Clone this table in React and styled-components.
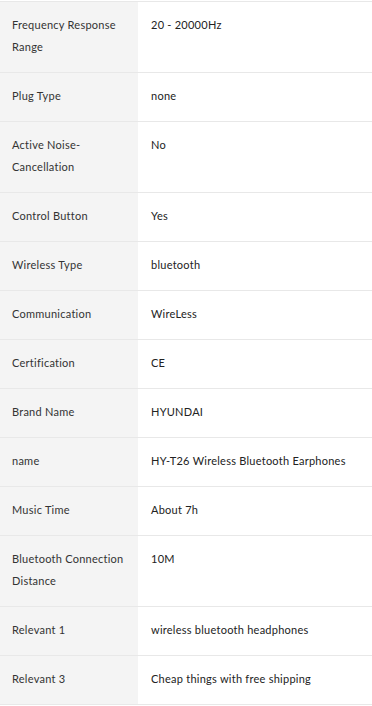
import styled, { createGlobalStyle } from "styled-components";

const GlobalStyle = createGlobalStyle`
  body {
    margin: 0;
    background: #fff;
    font-family: Lato, "Noto Sans", sans-serif;
  }
`;

const specs = [
  ["Frequency Response Range", "20 - 20000Hz"],
  ["Plug Type", "none"],
  ["Active Noise-Cancellation", "No"],
  ["Control Button", "Yes"],
  ["Wireless Type", "bluetooth"],
  ["Communication", "WireLess"],
  ["Certification", "CE"],
  ["Brand Name", "HYUNDAI"],
  ["name", "HY-T26 Wireless Bluetooth Earphones"],
  ["Music Time", "About 7h"],
  ["Bluetooth Connection Distance", "10M"],
  ["Relevant 1", "wireless bluetooth headphones"],
  ["Relevant 3", "Cheap things with free shipping"],
];

const SpecList = styled.div`
  margin-top: 1px;
  width: 372px;
  border-top: 1px solid #e8e8e8;
`;

const Row = styled.div`
  display: grid;
  grid-template-columns: 138px 1fr;
  border-bottom: 1px solid #e8e8e8;
`;

const Name = styled.div`
  background: #f4f4f4;
  padding: 12px 14px 14px 12px;
  font-size: 11px;
  line-height: 22px;
  letter-spacing: 0.25px;
  color: #333;
`;

const Value = styled.div`
  padding: 12px 12px 14px 13px;
  font-size: 11px;
  line-height: 22px;
  letter-spacing: 0.25px;
  color: #222;
`;

const App = () => {
  return (
    <>
      <GlobalStyle />
      <SpecList>
        {specs.map(([name, value]) => (
          <Row key={name}>
            <Name>{name}</Name>
            <Value>{value}</Value>
          </Row>
        ))}
      </SpecList>
    </>
  );
};

export default App;
